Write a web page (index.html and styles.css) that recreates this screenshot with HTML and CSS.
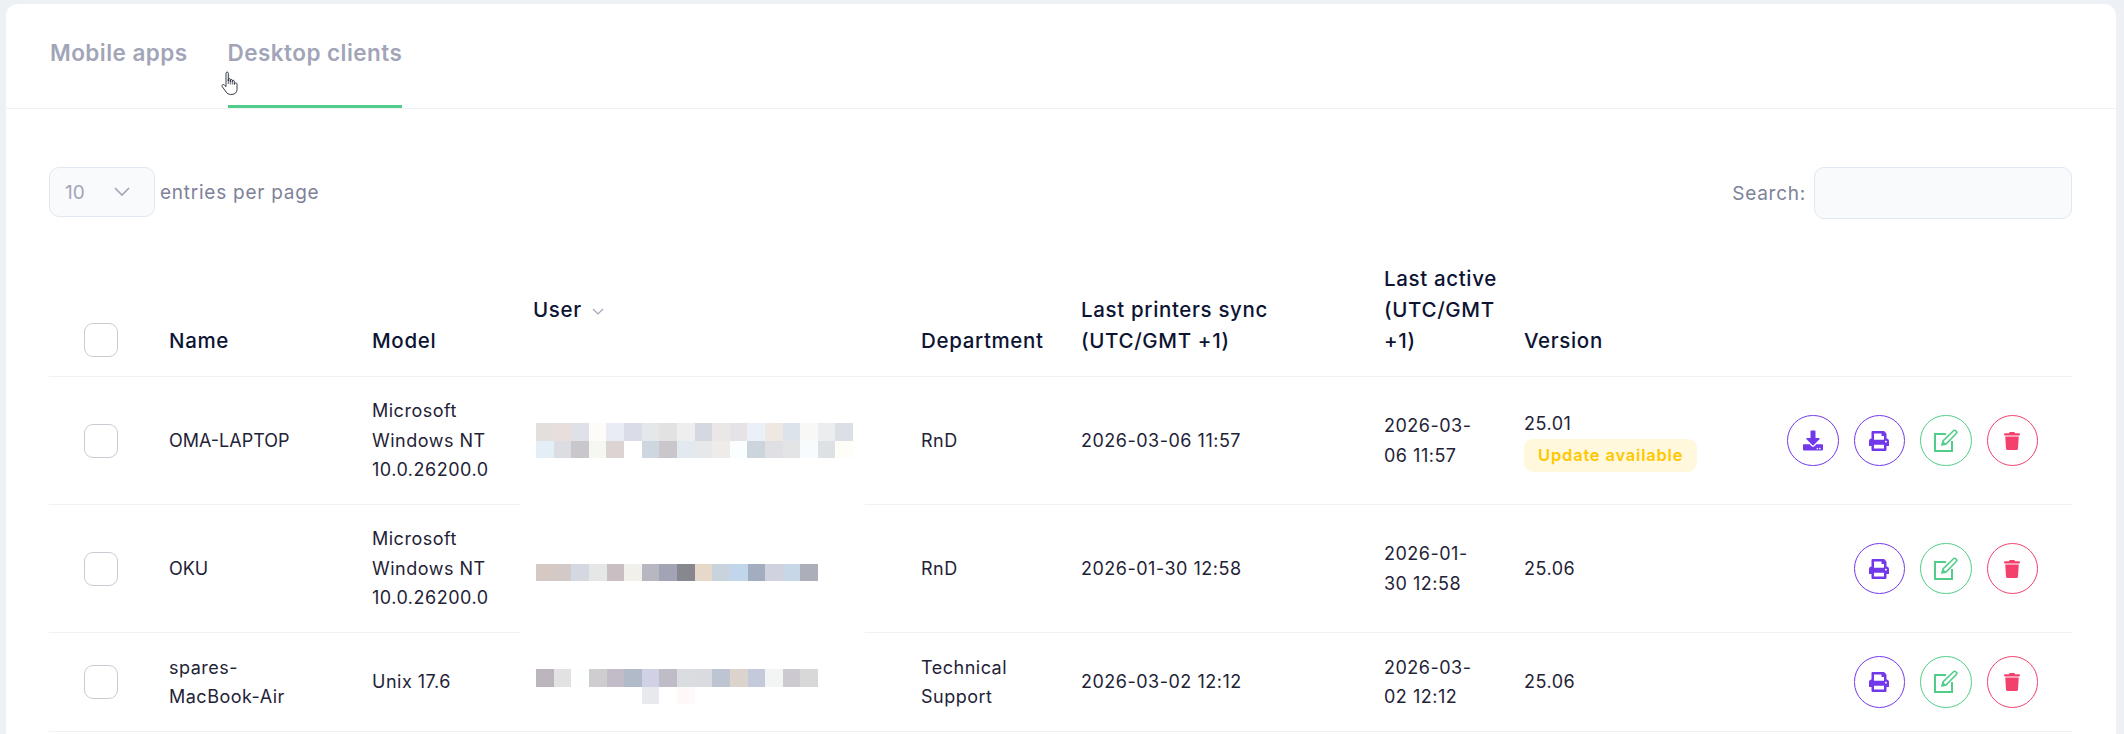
FILE: index.html
```html
<!DOCTYPE html>
<html lang="en">
<head>
<meta charset="utf-8">
<title>Desktop clients</title>
<link rel="stylesheet" href="styles.css">
</head>
<body>
<svg class="sprites" width="0" height="0" aria-hidden="true">
  <symbol id="i-download" viewBox="0 0 512 512"><path fill="currentColor" d="M216 0h80c13.3 0 24 10.7 24 24v168h87.7c17.8 0 26.7 21.5 14.1 34.1L269.7 378.3c-7.5 7.5-19.8 7.5-27.3 0L90.1 226.1c-12.6-12.6-3.7-34.1 14.1-34.1H192V24c0-13.3 10.7-24 24-24zm296 376v112c0 13.3-10.7 24-24 24H24c-13.3 0-24-10.7-24-24V376c0-13.3 10.7-24 24-24h146.7l49 49c20.1 20.1 52.5 20.1 72.6 0l49-49H488c13.3 0 24 10.7 24 24zm-124 88c0-11-9-20-20-20s-20 9-20 20 9 20 20 20 20-9 20-20zm64 0c0-11-9-20-20-20s-20 9-20 20 9 20 20 20 20-9 20-20z"/></symbol>
  <symbol id="i-print" viewBox="0 0 512 512"><path fill="currentColor" d="M448 192V77.25c0-8.49-3.37-16.62-9.37-22.63L393.37 9.37c-6-6-14.14-9.37-22.63-9.37H96C78.33 0 64 14.33 64 32v160c-35.35 0-64 28.65-64 64v112c0 8.84 7.16 16 16 16h48v96c0 17.67 14.33 32 32 32h320c17.67 0 32-14.33 32-32v-96h48c8.84 0 16-7.16 16-16V256c0-35.35-28.65-64-64-64zm-64 256H128v-96h256v96zm0-224H128V64h192v48c0 8.84 7.16 16 16 16h48v96zm48 72c-13.25 0-24-10.75-24-24 0-13.26 10.75-24 24-24s24 10.74 24 24c0 13.25-10.75 24-24 24z"/></symbol>
  <symbol id="i-edit" viewBox="0 0 24 24"><path fill="none" stroke="currentColor" stroke-width="2" d="M12 5H1v17h17V12"/><path fill="#fff" stroke="currentColor" stroke-width="1.6" d="M8 16l1-4L19.500 1.800a1.500 1.500 0 0 1 2.200 0l.6.6a1.500 1.500 0 0 1 0 2.100L12 15z"/><path fill="currentColor" d="M8 16l1-4 3 3z"/></symbol>
  <symbol id="i-trash" viewBox="0 0 448 512"><path fill="currentColor" d="M432 32H312l-9.400-18.700A24 24 0 0 0 281.100 0H166.800a23.720 23.720 0 0 0-21.400 13.300L136 32H16A16 16 0 0 0 0 48v32a16 16 0 0 0 16 16h416a16 16 0 0 0 16-16V48a16 16 0 0 0-16-16zM53.200 467a48 48 0 0 0 47.900 45h245.800a48 48 0 0 0 47.900-45L416 128H32z"/></symbol>
</svg>

<main class="card">
  <nav class="tabs">
    <a class="tab">Mobile apps</a>
    <a class="tab tab-active">Desktop clients</a>
  </nav>
  <svg class="cursor" viewBox="0 0 18 25" width="18" height="25" aria-hidden="true">
    <path fill="#fff" stroke="#23283a" stroke-width=".9" stroke-linejoin="round" d="M5 2.200c0-1.600 2.300-1.600 2.300 0V10V8.500c0-1.300 2-1.300 2 0V10.500V9.300c0-1.200 2-1.200 2 0v1.700-.8c0-1.200 2-1.200 2 0v2.300c1.200-1 2.700-.8 2.700.8v5.200c0 2.800-2 4.900-5 4.900H9.500c-2 0-3.200-.8-4.300-2.300L1.200 15.600c-.9-1.400.9-2.800 2.100-1.600L5 15.700z"/>
    <path fill="none" stroke="#23283a" stroke-width=".7" d="M7.300 9v4M9.300 10v3.500M11.300 11v2.500M13.300 12v2"/>
  </svg>

  <section class="body">
    <div class="toolbar">
      <label class="entries">
        <span class="select">10
          <svg class="chev" viewBox="0 0 16 10" width="16" height="10"><path d="M1 1l7 7 7-7" fill="none" stroke="#a1a5b7" stroke-width="1.600"/></svg>
        </span>
        entries per page
      </label>
      <label class="search">Search: <span class="search-box"></span></label>
    </div>

    <table class="grid">
      <colgroup>
        <col class="c-check"><col class="c-name"><col class="c-model"><col class="c-user"><col class="c-dept"><col class="c-sync"><col class="c-active"><col class="c-ver"><col class="c-act">
      </colgroup>
      <thead>
        <tr>
          <th class="check-cell"><span class="box"></span></th>
          <th>Name</th>
          <th>Model</th>
          <th class="th-user">User <svg class="sort" viewBox="0 0 12 7" width="12" height="7"><path d="M1 1l5 5 5-5" fill="none" stroke="#a1a5b7" stroke-width="1.200"/></svg></th>
          <th>Department</th>
          <th>Last printers sync<br>(UTC/GMT +1)</th>
          <th>Last active<br>(UTC/GMT<br>+1)</th>
          <th>Version</th>
          <th></th>
        </tr>
      </thead>
      <tbody>
        <tr>
          <td class="check-cell"><span class="box"></span></td>
          <td class="device">OMA-LAPTOP</td>
          <td>Microsoft<br>Windows NT<br>10.0.26200.0</td>
          <td class="user-cell">
            <div class="mask mask-1">
              <svg class="mosaic" viewBox="0 0 18 2" width="317" height="35" preserveAspectRatio="none" shape-rendering="crispEdges" aria-hidden="true">
                <rect x="0" y="0" width="1" height="1" fill="#e3dfdd"/><rect x="1" y="0" width="1" height="1" fill="#e8dfdc"/><rect x="2" y="0" width="1" height="1" fill="#dfe1e9"/><rect x="3" y="0" width="1" height="1" fill="#fdfcf8"/><rect x="4" y="0" width="1" height="1" fill="#e9ecf4"/><rect x="5" y="0" width="1" height="1" fill="#dadde7"/><rect x="6" y="0" width="1" height="1" fill="#e5e8eb"/><rect x="7" y="0" width="1" height="1" fill="#e2e2e3"/><rect x="8" y="0" width="1" height="1" fill="#efeeee"/><rect x="9" y="0" width="1" height="1" fill="#d4d8e0"/><rect x="10" y="0" width="1" height="1" fill="#eae7e6"/><rect x="11" y="0" width="1" height="1" fill="#e5e3e5"/><rect x="12" y="0" width="1" height="1" fill="#ebeff7"/><rect x="13" y="0" width="1" height="1" fill="#efe8e2"/><rect x="14" y="0" width="1" height="1" fill="#dde3ea"/><rect x="15" y="0" width="1" height="1" fill="#f8f8f6"/><rect x="16" y="0" width="1" height="1" fill="#ecedef"/><rect x="17" y="0" width="1" height="1" fill="#dbdfe6"/>
                <rect x="0" y="1" width="1" height="1" fill="#e3eef6"/><rect x="1" y="1" width="1" height="1" fill="#dcdde2"/><rect x="2" y="1" width="1" height="1" fill="#c9c7cc"/><rect x="3" y="1" width="1" height="1" fill="#f5f7f0"/><rect x="4" y="1" width="1" height="1" fill="#dcd3d3"/><rect x="6" y="1" width="1" height="1" fill="#ced6e0"/><rect x="7" y="1" width="1" height="1" fill="#c9c6cc"/><rect x="8" y="1" width="1" height="1" fill="#e2eaf0"/><rect x="9" y="1" width="1" height="1" fill="#e7e8ea"/><rect x="10" y="1" width="1" height="1" fill="#efebe8"/><rect x="11" y="1" width="1" height="1" fill="#fbfefe"/><rect x="12" y="1" width="1" height="1" fill="#ccd4dc"/><rect x="13" y="1" width="1" height="1" fill="#e0dfe3"/><rect x="14" y="1" width="1" height="1" fill="#e3e4e6"/><rect x="15" y="1" width="1" height="1" fill="#f7fbfd"/><rect x="16" y="1" width="1" height="1" fill="#dee1e4"/><rect x="17" y="1" width="1" height="1" fill="#fefdf8"/>
              </svg>
            </div>
          </td>
          <td>RnD</td>
          <td>2026-03-06 11:57</td>
          <td>2026-03-<br>06 11:57</td>
          <td>25.01<br><span class="badge">Update available</span></td>
          <td class="act-cell"><div class="actions">
            <a class="btn btn-purple"><svg class="ic ic-dl"><use href="#i-download"/></svg></a>
            <a class="btn btn-purple"><svg class="ic ic-pr"><use href="#i-print"/></svg></a>
            <a class="btn btn-green"><svg class="ic ic-ed"><use href="#i-edit"/></svg></a>
            <a class="btn btn-red"><svg class="ic ic-tr"><use href="#i-trash"/></svg></a>
          </div></td>
        </tr>
        <tr>
          <td class="check-cell"><span class="box"></span></td>
          <td class="device">OKU</td>
          <td>Microsoft<br>Windows NT<br>10.0.26200.0</td>
          <td class="user-cell">
            <div class="mask mask-2">
              <svg class="mosaic" viewBox="0 0 16 1" width="282" height="17" preserveAspectRatio="none" shape-rendering="crispEdges" aria-hidden="true">
                <rect x="0" y="0" width="1" height="1" fill="#d6c8c3"/><rect x="1" y="0" width="1" height="1" fill="#d3c9c7"/><rect x="2" y="0" width="1" height="1" fill="#d3d8e1"/><rect x="3" y="0" width="1" height="1" fill="#e5e7e6"/><rect x="4" y="0" width="1" height="1" fill="#c9bfc3"/><rect x="5" y="0" width="1" height="1" fill="#f1f0eb"/><rect x="6" y="0" width="1" height="1" fill="#b7b7c2"/><rect x="7" y="0" width="1" height="1" fill="#a2a3b5"/><rect x="8" y="0" width="1" height="1" fill="#878790"/><rect x="9" y="0" width="1" height="1" fill="#e6d9c9"/><rect x="10" y="0" width="1" height="1" fill="#c9d3de"/><rect x="11" y="0" width="1" height="1" fill="#c1d6ea"/><rect x="12" y="0" width="1" height="1" fill="#a3adc0"/><rect x="13" y="0" width="1" height="1" fill="#d0d3de"/><rect x="14" y="0" width="1" height="1" fill="#c7d7e7"/><rect x="15" y="0" width="1" height="1" fill="#acaeba"/>
              </svg>
            </div>
          </td>
          <td>RnD</td>
          <td>2026-01-30 12:58</td>
          <td>2026-01-<br>30 12:58</td>
          <td>25.06</td>
          <td class="act-cell"><div class="actions">
            <a class="btn btn-purple"><svg class="ic ic-pr"><use href="#i-print"/></svg></a>
            <a class="btn btn-green"><svg class="ic ic-ed"><use href="#i-edit"/></svg></a>
            <a class="btn btn-red"><svg class="ic ic-tr"><use href="#i-trash"/></svg></a>
          </div></td>
        </tr>
        <tr>
          <td class="check-cell"><span class="box"></span></td>
          <td>spares-<br>MacBook-Air</td>
          <td>Unix 17.6</td>
          <td class="user-cell">
            <svg class="mosaic mosaic-3" viewBox="0 0 16 2" width="282" height="35" preserveAspectRatio="none" shape-rendering="crispEdges" aria-hidden="true">
              <rect x="0" y="0" width="1" height="1" fill="#bdb5be"/><rect x="1" y="0" width="1" height="1" fill="#e2e2e2"/><rect x="2" y="0" width="1" height="1" fill="#fdfefe"/><rect x="3" y="0" width="1" height="1" fill="#cfcdcf"/><rect x="4" y="0" width="1" height="1" fill="#c2bbc8"/><rect x="5" y="0" width="1" height="1" fill="#b0bac9"/><rect x="6" y="0" width="1" height="1" fill="#d0d1e5"/><rect x="7" y="0" width="1" height="1" fill="#bfbbc7"/><rect x="8" y="0" width="1" height="1" fill="#dadde0"/><rect x="9" y="0" width="1" height="1" fill="#dadbe0"/><rect x="10" y="0" width="1" height="1" fill="#bcc5d1"/><rect x="11" y="0" width="1" height="1" fill="#dcd3cd"/><rect x="12" y="0" width="1" height="1" fill="#c4cadc"/><rect x="13" y="0" width="1" height="1" fill="#f2f5f4"/><rect x="14" y="0" width="1" height="1" fill="#cccad0"/><rect x="15" y="0" width="1" height="1" fill="#d8d8d8"/>
              <rect x="6" y="1" width="1" height="1" fill="#e8e9ee"/><rect x="8" y="1" width="1" height="1" fill="#fef9f8"/>
            </svg>
          </td>
          <td>Technical<br>Support</td>
          <td>2026-03-02 12:12</td>
          <td>2026-03-<br>02 12:12</td>
          <td>25.06</td>
          <td class="act-cell"><div class="actions">
            <a class="btn btn-purple"><svg class="ic ic-pr"><use href="#i-print"/></svg></a>
            <a class="btn btn-green"><svg class="ic ic-ed"><use href="#i-edit"/></svg></a>
            <a class="btn btn-red"><svg class="ic ic-tr"><use href="#i-trash"/></svg></a>
          </div></td>
        </tr>
      </tbody>
    </table>
  </section>
</main>
</body>
</html>
```

FILE: styles.css
```css
* { box-sizing: border-box; }
html, body { height: 100%; }
body {
  margin: 0;
  padding: 4px 8px 0 6px;
  background: #edf1f5;
  font-family: "Inter", "Liberation Sans", sans-serif;
  color: #181c32;
  overflow: hidden;
}
.sprites { position: absolute; }

.card {
  position: relative;
  background: #fff;
  border-radius: 12px 12px 0 0;
  min-height: 800px;
}

.tabs {
  display: flex;
  gap: 40px;
  height: 105px;
  padding-left: 44px;
  border-bottom: 1px solid #eff2f5;
}
.tab {
  height: 104px;
  padding-top: 34px;
  font-size: 22.5px;
  font-weight: 600;
  letter-spacing: .45px;
  line-height: 30px;
  color: #a1a5b7;
}
.tab-active { border-bottom: 3px solid #50cd89; }
.cursor { position: absolute; left: 215px; top: 67px; }

.body { padding: 58px 44px 0 43px; }

.toolbar {
  display: flex;
  justify-content: space-between;
  align-items: flex-start;
  height: 52px;
  font-size: 19px;
  letter-spacing: .75px;
  color: #7e8299;
}
.entries { display: flex; align-items: center; gap: 5px; height: 50px; }
.select {
  display: flex;
  align-items: center;
  justify-content: space-between;
  width: 106px;
  height: 50px;
  padding: 0 24px 0 15px;
  background: #f9fafc;
  border: 1px solid #e2e8f0;
  border-radius: 10px;
  color: #a1a5b7;
  letter-spacing: 0;
}
.search { display: flex; align-items: center; gap: 8px; height: 52px; }
.search-box {
  width: 258px;
  height: 52px;
  background: #f9fafc;
  border: 1px solid #e2e8f0;
  border-radius: 10px;
}

.grid {
  width: 2023px;
  table-layout: fixed;
  border-collapse: collapse;
  margin-top: 44px;
  font-size: 18px;
  line-height: 29.5px;
  letter-spacing: .5px;
}
.c-check { width: 107px; }
.c-name { width: 203px; }
.c-model { width: 161px; }
.c-user { width: 388px; }
.c-dept { width: 160px; }
.c-sync { width: 303px; }
.c-active { width: 140px; }
.c-ver { width: 265px; }
.c-act { width: 296px; }

th, td {
  padding: 0 13px;
  text-align: left;
  border-bottom: 1px solid #eff2f5;
}
th {
  padding-bottom: 20px;
  vertical-align: bottom;
  font-size: 20.5px;
  font-weight: 500;
  letter-spacing: .65px;
  line-height: 31px;
  white-space: nowrap;
  color: #0d1433;
}
.th-user { vertical-align: middle; }
.sort { margin-left: 4px; vertical-align: middle; }
tbody tr { height: 128px; }
tbody tr:last-child { height: 99px; }
td { vertical-align: middle; color: #1f2337; }
.device { letter-spacing: 0; }

.check-cell { padding: 0 0 0 35px; line-height: 0; vertical-align: middle; }
thead .check-cell { vertical-align: bottom; padding-bottom: 19px; }
.box {
  display: inline-block;
  width: 34px;
  height: 34px;
  border: 1px solid #c8ccd2;
  border-radius: 9px;
  background: #fff;
}

.user-cell { position: relative; padding: 0; }
.mask {
  position: absolute;
  left: 0;
  top: 0;
  bottom: -1px;
  width: 345px;
  padding-left: 16px;
  background: #fff;
  display: flex;
  align-items: center;
}
.mosaic { display: block; flex: none; }
.mask-1 .mosaic { margin-top: -2px; }
.mask-2 .mosaic { margin-top: 6px; }
.mosaic-3 { margin: 8px 0 0 16px; }

.badge {
  display: inline-block;
  height: 33px;
  padding: 0 14px;
  border-radius: 9px;
  background: #fff8dd;
  color: #ffc700;
  font-size: 16.5px;
  font-weight: 600;
  letter-spacing: .8px;
  line-height: 33px;
  vertical-align: top;
}

.act-cell { padding-left: 0; }
.actions { display: flex; justify-content: flex-end; gap: 15px; padding-right: 21px; }
.btn {
  display: flex;
  flex: none;
  align-items: center;
  justify-content: center;
  width: 51.5px;
  height: 51.5px;
  border: 1.5px solid currentColor;
  border-radius: 50%;
}
.btn-purple { color: #7239ea; }
.btn-green { color: #50cd89; }
.btn-red { color: #f1416c; }
.ic { display: block; }
.ic-dl { width: 20px; height: 21px; }
.ic-pr { width: 20px; height: 20px; }
.ic-ed { width: 24px; height: 24px; }
.ic-tr { width: 16px; height: 18px; }
```
